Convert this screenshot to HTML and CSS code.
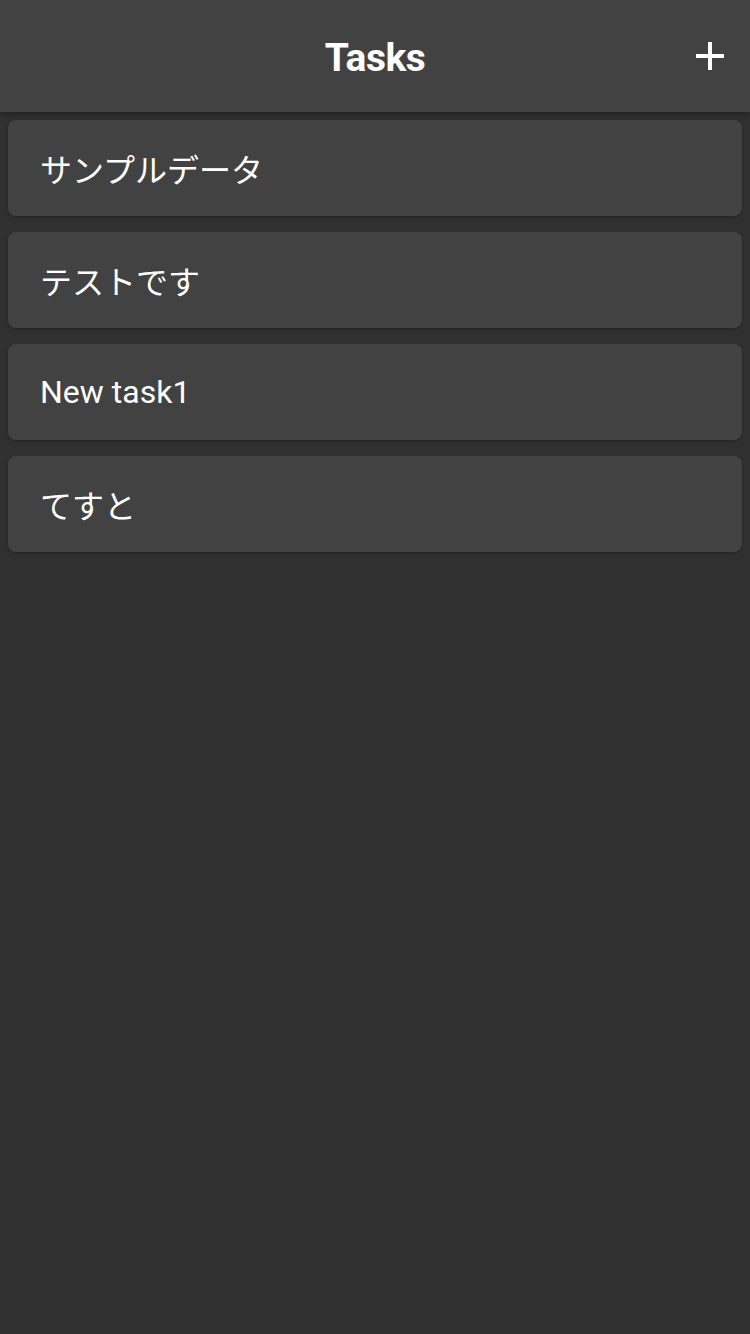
FILE: index.html
```html
<!DOCTYPE html>
<html lang="ja">
<head>
<meta charset="utf-8">
<title>Tasks</title>
<link rel="stylesheet" href="styles.css">
</head>
<body>
<header class="bar">
  <h1 class="title">Tasks</h1>
  <button class="add" aria-label="Add">
    <svg viewBox="0 0 32 32" width="32" height="32"><path d="M16 2v28M2 16h28" stroke="#fff" stroke-width="4" fill="none"/></svg>
  </button>
</header>
<main class="list">
  <div class="card">サンプルデータ</div>
  <div class="card">テストです</div>
  <div class="card">New task1</div>
  <div class="card">てすと</div>
</main>
</body>
</html>
```
FILE: styles.css
```css
html, body {
  margin: 0;
  padding: 0;
  background: #303030;
  height: 100%;
}
body {
  font-family: Roboto, "Noto Sans CJK JP", sans-serif;
  color: #fff;
}
.bar {
  position: relative;
  height: 112px;
  box-sizing: border-box;
  padding-top: 4px;
  background: #424242;
  display: flex;
  align-items: center;
  justify-content: center;
  box-shadow: 0 2px 6px rgba(0,0,0,0.35);
  z-index: 1;
}
.title {
  margin: 0;
  font-size: 39px;
  font-weight: 700;
  letter-spacing: -0.5px;
}
.add {
  position: absolute;
  right: 24px;
  top: 40px;
  background: none;
  border: 0;
  padding: 0;
  width: 32px;
  height: 32px;
  display: flex;
}
.list {
  padding: 8px 8px;
  display: flex;
  flex-direction: column;
  gap: 16px;
}
.card {
  height: 96px;
  box-sizing: border-box;
  background: #424242;
  border-radius: 8px;
  padding: 0 32px;
  display: flex;
  align-items: center;
  font-size: 32px;
  box-shadow: 0 1px 3px rgba(0,0,0,0.3);
}
```
